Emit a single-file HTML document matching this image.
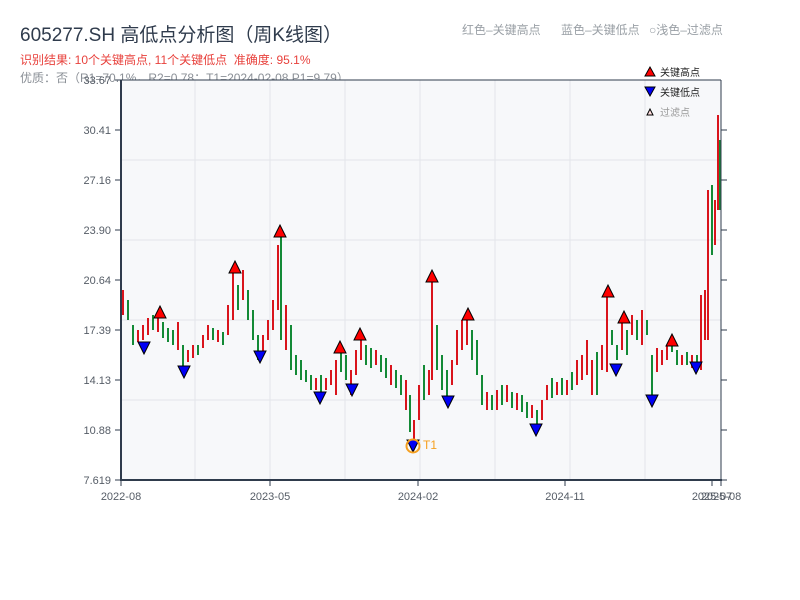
<!DOCTYPE html>
<html><head><meta charset="utf-8"><style>
html,body{margin:0;padding:0;background:#fff;width:800px;height:600px;overflow:hidden}
body{font-family:"Liberation Sans","Noto Sans CJK SC",sans-serif;position:relative}
.t{position:absolute;white-space:nowrap}
</style></head><body>
<div class="t" style="left:20px;top:20px;font-size:19px;color:#2f3b4c">605277.SH 高低点分析图（周K线图）</div>
<div class="t" style="left:20px;top:51px;font-size:12px;color:#e8413c">识别结果: 10个关键高点, 11个关键低点&nbsp;&nbsp;准确度: 95.1%</div>
<div class="t" style="left:20px;top:69px;font-size:12px;color:#8a8f96">优质：否（R1=70.1%，R2=0.78；T1=2024-02-08 P1=9.79）</div>
<div class="t" style="left:462px;top:21px;font-size:12px;color:#9aa0a6">红色–关键高点</div>
<div class="t" style="left:561px;top:21px;font-size:12px;color:#9aa0a6">蓝色–关键低点</div>
<div class="t" style="left:649px;top:21px;font-size:12px;color:#9aa0a6">○浅色–过滤点</div>
<svg width="800" height="600" style="position:absolute;left:0;top:0" font-family="Liberation Sans">
<rect x="121" y="80" width="600" height="400" fill="#f7f8fa"/>
<g stroke="#e3e5ea" stroke-width="1">
<line x1="195" y1="80" x2="195" y2="480"/><line x1="270" y1="80" x2="270" y2="480"/><line x1="345" y1="80" x2="345" y2="480"/><line x1="420" y1="80" x2="420" y2="480"/><line x1="495" y1="80" x2="495" y2="480"/><line x1="570" y1="80" x2="570" y2="480"/><line x1="645" y1="80" x2="645" y2="480"/>
<line x1="121" y1="160" x2="721" y2="160"/><line x1="121" y1="240" x2="721" y2="240"/><line x1="121" y1="320" x2="721" y2="320"/><line x1="121" y1="400" x2="721" y2="400"/>
</g>
<path stroke="#d9141c" stroke-width="2" fill="none" d="M123,290V315M138,330V342M143,325V340M148,318V335M158,318V332M178,322V350M188,350V362M193,345V358M203,335V348M208,325V340M218,330V342M228,305V335M233,270V320M243,270V300M263,335V355M268,320V340M273,300V330M278,245V310M286,305V350M316,378V390M326,378V390M331,370V385M336,360V395M351,370V395M356,350V375M361,335V360M376,350V365M391,365V385M406,380V410M414,420V445M419,385V420M429,370V395M432,280V380M452,360V385M457,330V365M462,320V350M467,318V345M487,392V410M497,390V410M507,385V402M517,393V410M532,405V418M542,400V420M547,385V400M557,382V395M567,380V395M577,360V385M582,355V380M587,340V375M592,360V395M602,345V370M607,295V372M622,320V350M632,315V335M642,310V345M657,348V372M662,350V365M667,345V360M682,355V365M692,355V368M701,295V370M705,290V340M708,190V340M715,200V245M718,115V210"/>
<path stroke="#138a36" stroke-width="2" fill="none" d="M128,300V320M133,325V345M153,315V330M163,322V338M168,328V342M173,330V345M183,345V368M198,345V355M213,328V340M223,332V345M238,285V310M248,290V320M253,310V340M258,335V360M281,235V340M291,325V370M296,355V375M301,360V380M306,370V382M311,375V390M321,375V395M341,350V372M346,355V380M366,345V365M371,348V368M381,355V372M386,358V378M396,370V388M401,375V395M410,395V432M424,365V400M437,325V370M442,355V390M447,370V400M472,330V360M477,340V375M482,375V405M492,395V410M502,385V405M512,392V408M522,395V412M527,402V418M537,410V428M552,378V398M562,378V395M572,372V390M597,352V395M612,330V345M617,345V360M627,330V355M637,320V340M647,320V335M652,355V400M672,340V352M677,350V365M687,352V365M697,355V365M712,185V255M720,140V210"/>
<g fill="#f00" stroke="#000" stroke-width="1">
<polygon points="154,318 166,318 160,306"/><polygon points="229,273 241,273 235,261"/><polygon points="274,237 286,237 280,225"/><polygon points="334,353 346,353 340,341"/><polygon points="354,340 366,340 360,328"/><polygon points="426,282 438,282 432,270"/><polygon points="462,320 474,320 468,308"/><polygon points="602,297 614,297 608,285"/><polygon points="618,323 630,323 624,311"/><polygon points="666,346 678,346 672,334"/>
</g>
<g fill="#0000f5" stroke="#000" stroke-width="1">
<polygon points="138,342 150,342 144,354"/><polygon points="178,366 190,366 184,378"/><polygon points="254,351 266,351 260,363"/><polygon points="314,392 326,392 320,404"/><polygon points="346,384 358,384 352,396"/><polygon points="442,396 454,396 448,408"/><polygon points="530,424 542,424 536,436"/><polygon points="610,364 622,364 616,376"/><polygon points="646,395 658,395 652,407"/><polygon points="690,362 702,362 696,374"/><polygon points="407,440 419,440 413,452"/>
</g>
<circle cx="413" cy="446" r="6.5" fill="none" stroke="#f5a020" stroke-width="2"/>
<text x="423" y="449" font-size="12" fill="#f5a020">T1</text>
<line x1="121" y1="80" x2="121" y2="481" stroke="#2f3b4c" stroke-width="2"/>
<line x1="120" y1="480" x2="722" y2="480" stroke="#2f3b4c" stroke-width="2"/>
<line x1="120" y1="80" x2="721" y2="80" stroke="#2f3b4c" stroke-width="1"/>
<line x1="721" y1="80" x2="721" y2="481" stroke="#2f3b4c" stroke-width="1"/>
<g stroke="#2f3b4c" stroke-width="1">
<path d="M115,80H121M115,130H121M115,180H121M115,230H121M115,280H121M115,330H121M115,380H121M115,430H121M115,480H121M721,130H727M721,180H727M721,230H727M721,280H727M721,330H727M721,380H727M721,430H727M721,480H727M121,480V486M270,480V486M418,480V486M565,480V486M712,480V486M721,480V486"/>
</g>
<g font-size="11" fill="#555c66" text-anchor="end">
<text x="111" y="84">33.67</text><text x="111" y="134">30.41</text><text x="111" y="184">27.16</text><text x="111" y="234">23.90</text><text x="111" y="284">20.64</text><text x="111" y="334">17.39</text><text x="111" y="384">14.13</text><text x="111" y="434">10.88</text><text x="111" y="484">7.619</text>
</g>
<g font-size="11" fill="#555c66" text-anchor="middle">
<text x="121" y="500">2022-08</text><text x="270" y="500">2023-05</text><text x="418" y="500">2024-02</text><text x="565" y="500">2024-11</text><text x="712" y="500">2025-07</text><text x="721" y="500">2025-08</text>
</g>
<polygon points="645,76 655,76 650,67" fill="#f00" stroke="#000"/><text x="660" y="76" font-size="10" fill="#222" font-family="Noto Sans CJK SC">关键高点</text>
<polygon points="645,87 655,87 650,96" fill="#0000f5" stroke="#000"/><text x="660" y="96" font-size="10" fill="#222" font-family="Noto Sans CJK SC">关键低点</text>
<polygon points="647,115 653,115 650,109" fill="#fdd" stroke="#000"/><text x="660" y="116" font-size="10" fill="#999" font-family="Noto Sans CJK SC">过滤点</text>
</svg>
</body></html>
